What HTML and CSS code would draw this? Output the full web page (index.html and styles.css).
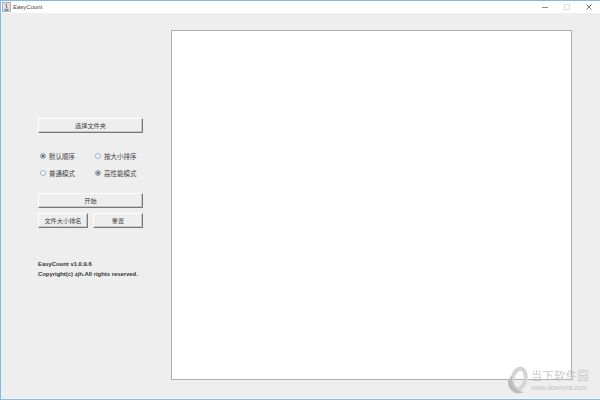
FILE: index.html
```html
<!DOCTYPE html>
<html lang="zh">
<head>
<meta charset="utf-8">
<title>EasyCount</title>
<link rel="stylesheet" href="styles.css">
</head>
<body>
<div class="window">
  <header class="titlebar">
    <svg class="app-icon" width="9" height="10" viewBox="0 0 9 10">
      <rect x="0.5" y="0.5" width="8" height="9" fill="#dde2ea" stroke="#a9b2c0"/>
      <path d="M4.5 1.5 C3 3.5 6 4.5 4.5 6.5" fill="none" stroke="#d9691e" stroke-width="1.2"/>
      <path d="M2 7 H7 L6 9 H3 Z" fill="#7f92b3"/>
    </svg>
    <span class="title">EasyCount</span>
    <div class="controls">
      <svg width="6" height="6" viewBox="0 0 6 6"><path d="M0 3.5H6" stroke="#8d8d8d"/></svg>
      <svg width="6" height="6" viewBox="0 0 6 6"><rect x="0.5" y="0.5" width="5" height="5" fill="none" stroke="#dedede"/></svg>
      <svg width="6" height="6" viewBox="0 0 6 6"><path d="M0.5 0.5L5.5 5.5M5.5 0.5L0.5 5.5" stroke="#777"/></svg>
    </div>
  </header>
  <main class="content">
    <aside class="side">
      <button class="btn">选择文件夹</button>
      <div class="radios">
        <label class="radio"><i class="dot on"></i>默认顺序</label>
        <label class="radio"><i class="dot"></i>按大小排序</label>
        <label class="radio"><i class="dot"></i>普通模式</label>
        <label class="radio"><i class="dot on"></i>高性能模式</label>
      </div>
      <button class="btn">开始</button>
      <div class="btn-row">
        <button class="btn">文件大小排名</button>
        <button class="btn">重置</button>
      </div>
      <div class="about">
        <p>EasyCount v1.0.9.6</p>
        <p>Copyright(c) zjh.All rights reserved.</p>
      </div>
    </aside>
    <div class="output"></div>
  </main>
  <div class="watermark">
    <svg class="wm-logo" width="22" height="30" viewBox="0 0 22 30">
      <ellipse cx="12" cy="13" rx="6.5" ry="10.5" fill="none" stroke="#d4d4d4" stroke-width="4" transform="rotate(12 12 13)"/>
      <path d="M1 14 C0 25 10 30 17 26 C10 25 5 21 4.5 10 Z" fill="#bdbdbd"/>
    </svg>
    <div class="wm-text">
      <span class="wm-cn">当下软件园</span>
      <span class="wm-url">www.downxia.com</span>
    </div>
  </div>
</div>
</body>
</html>
```
FILE: styles.css
```css
* { box-sizing: border-box; }
html, body { margin: 0; padding: 0; }
body {
  width: 600px;
  height: 400px;
  overflow: hidden;
  background: #fff;
  font-family: "Liberation Sans", "Noto Sans CJK SC", sans-serif;
}
.window {
  position: relative;
  width: 600px;
  height: 400px;
  display: flex;
  flex-direction: column;
  border: 1px solid #7dbbe8;
  border-right: 0;
}
.titlebar {
  height: 12px;
  flex: none;
  display: flex;
  align-items: center;
  padding-left: 1px;
  background: #fff;
}
.app-icon { flex: none; }
.title {
  margin-left: 2px;
  font-size: 6px;
  color: #444;
}
.controls {
  margin-left: auto;
  display: flex;
  align-items: center;
  gap: 16px;
  padding-right: 8px;
}
.content {
  flex: 1;
  display: flex;
  background: #eeeeee;
  padding: 17px 28px 18px 37px;
  border-bottom: 1px solid #f7f7f7;
}
.side {
  width: 105px;
  flex: none;
  padding-top: 88px;
  display: flex;
  flex-direction: column;
}
.btn {
  display: block;
  width: 100%;
  height: 15px;
  padding: 0;
  font-family: inherit;
  font-size: 6.2px;
  color: #444;
  background: #eeeeee;
  border: 1px solid;
  border-color: #fff #777 #777 #fff;
  box-shadow: inset -1px -1px 0 #c8c8c8;
}
.radios {
  margin: 17px 0 15px;
  display: grid;
  grid-template-columns: 55px 50px;
  row-gap: 6px;
}
.radio {
  display: flex;
  align-items: center;
  height: 11px;
  padding-left: 2px;
  gap: 3px;
  font-size: 6.5px;
  color: #444;
  white-space: nowrap;
}
.dot {
  width: 6px;
  height: 6px;
  flex: none;
  border-radius: 50%;
  background: #f4f8fc;
  border: 1px solid #9db3c8;
}
.dot.on {
  background: #333;
  box-shadow: 0 0 0 1px #dde6ef inset;
}
.btn-row {
  margin-top: 5px;
  display: grid;
  grid-template-columns: 50px 50px;
  column-gap: 5px;
}
.about {
  margin-top: 32px;
  font-size: 5.9px;
  font-weight: bold;
  color: #333;
}
.about p {
  margin: 0 0 2px;
  line-height: 8px;
  white-space: nowrap;
}
.output {
  width: 401px;
  flex: none;
  background: #fff;
  border: 1px solid #a9b0b7;
  margin-left: 28px;
}
.watermark {
  position: absolute;
  left: 506px;
  top: 365px;
  display: flex;
  align-items: center;
  gap: 2px;
}
.wm-logo { flex: none; }
.wm-text {
  display: flex;
  flex-direction: column;
  gap: 1px;
}
.wm-cn {
  font-size: 11px;
  line-height: 13px;
  color: #c9c9c9;
  letter-spacing: 0.6px;
  white-space: nowrap;
}
.wm-url {
  font-size: 6.8px;
  line-height: 8px;
  color: #c4c4c4;
  white-space: nowrap;
}
```
